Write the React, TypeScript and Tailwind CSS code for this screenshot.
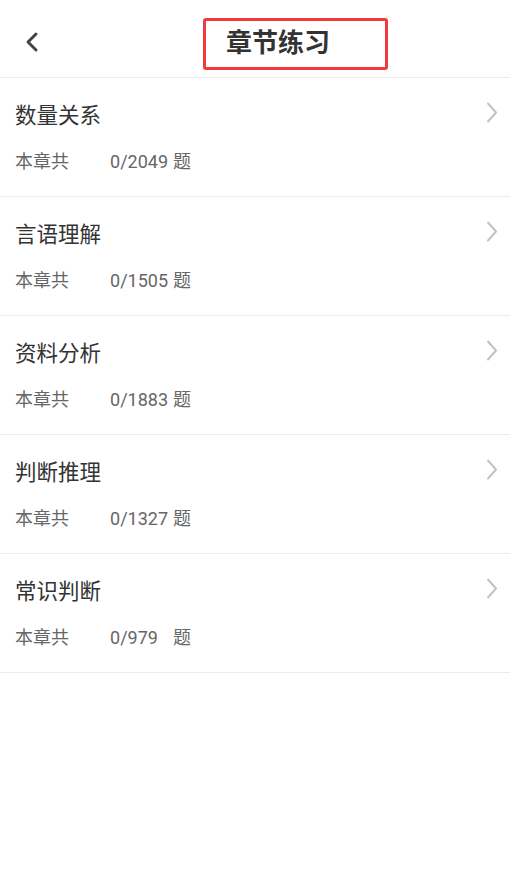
import React from 'react';

interface Chapter {
  name: string;
  done: number;
  total: number;
}

const chapters: Chapter[] = [
  { name: '数量关系', done: 0, total: 2049 },
  { name: '言语理解', done: 0, total: 1505 },
  { name: '资料分析', done: 0, total: 1883 },
  { name: '判断推理', done: 0, total: 1327 },
  { name: '常识判断', done: 0, total: 979 },
];

const font = { fontFamily: 'Roboto, "Noto Sans CJK SC", sans-serif' };

const ChapterRow: React.FC<{ chapter: Chapter }> = ({ chapter }) => (
  <div className="relative h-[119px] border-b border-[#ececec] px-[15px] pt-[24px]">
    <div className="text-[21.5px] leading-[28px] text-[#333333]">{chapter.name}</div>
    <div className="mt-[20px] flex text-[18px] leading-[24px] text-[#666666]">
      <span className="w-[95px]">本章共</span>
      <span className="w-[63px]">
        {chapter.done}/{chapter.total}
      </span>
      <span>题</span>
    </div>
    {/* right arrow */}
    <svg
      className="absolute right-[12px] top-[24px]"
      width="12"
      height="21"
      viewBox="0 0 12 21"
      fill="none"
      stroke="#c2c2c2"
      strokeWidth="2"
      strokeLinecap="round"
      strokeLinejoin="round"
    >
      <polyline points="2,1.5 10,10.5 2,19.5" />
    </svg>
  </div>
);

const App: React.FC = () => {
  return (
    <div className="min-h-[886px] w-full bg-white" style={font}>
      {/* Header */}
      <div className="relative flex h-[78px] items-center border-b border-[#ececec]">
        <button className="ml-[24px] mt-[6px] flex h-[24px] w-[16px] items-center" aria-label="返回">
          <svg width="16" height="22" viewBox="0 0 16 22" fill="none" stroke="#444444" strokeWidth="3" strokeLinecap="round" strokeLinejoin="round">
            <polyline points="12,3 4,11 12,19" />
          </svg>
        </button>
        <h1 className="ml-[186px] mt-[8px] text-[26px] font-bold leading-[32px] text-[#333333]">章节练习</h1>
        {/* annotation box */}
        <div className="pointer-events-none absolute left-[203px] top-[18px] h-[52px] w-[185px] rounded-[3px] border-[3px] border-[#f23a3c]" />
      </div>

      {chapters.map((c) => (
        <ChapterRow key={c.name} chapter={c} />
      ))}
    </div>
  );
};

export default App;
